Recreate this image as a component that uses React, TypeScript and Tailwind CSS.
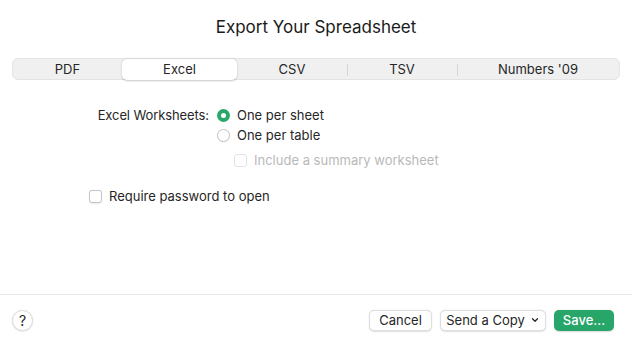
import { ChevronDown } from "lucide-react";

const tabs = [
  { label: "PDF", w: "w-[109px]" },
  { label: "Excel", w: "w-[115px]", active: true },
  { label: "CSV", w: "w-[110px]" },
  { label: "TSV", w: "w-[110px]" },
  { label: "Numbers '09", w: "flex-1" },
];

function Radio({ checked }: { checked?: boolean }) {
  return checked ? (
    <span className="flex h-[13px] w-[13px] items-center justify-center rounded-full bg-[#2aa76a]">
      <span className="h-[5px] w-[5px] rounded-full bg-white" />
    </span>
  ) : (
    <span className="h-[13px] w-[13px] rounded-full border border-[#c4c4c4] bg-white shadow-[0_0.5px_1px_rgba(0,0,0,0.08)]" />
  );
}

function Checkbox({ disabled }: { disabled?: boolean }) {
  return (
    <span
      className={
        disabled
          ? "h-[13px] w-[13px] rounded-[3px] border border-[#e3e3e3] bg-white"
          : "h-[13px] w-[13px] rounded-[3px] border border-[#c4c4c4] bg-white shadow-[0_0.5px_1px_rgba(0,0,0,0.08)]"
      }
    />
  );
}

export default function App() {
  return (
    <div
      className="flex h-[341px] w-[632px] flex-col bg-white text-[13px] leading-[19px] text-[#262626]"
      style={{ fontFamily: "Inter, 'Liberation Sans', sans-serif" }}
    >
      <h1 className="pt-[16px] text-center text-[17px] leading-[22px] text-[#1a1a1a]">
        Export Your Spreadsheet
      </h1>

      {/* Segmented control */}
      <div className="mx-[12px] mt-[20px] flex h-[22px] items-center rounded-[6px] border border-[#e4e4e4] bg-[#f0f0f0]">
        {tabs.map((t, i) => {
          const showSep = i > 0 && !t.active && !tabs[i - 1].active;
          return (
            <div key={t.label} className={`relative flex h-full items-center justify-center ${t.w}`}>
              {showSep && <span className="absolute left-0 top-[5px] h-[12px] w-px bg-[#d6d6d6]" />}
              {t.active ? (
                <div className="flex h-[21px] w-full items-center justify-center rounded-[5px] bg-white shadow-[0_0.5px_2px_rgba(0,0,0,0.22)]">
                  {t.label}
                </div>
              ) : (
                <span>{t.label}</span>
              )}
            </div>
          );
        })}
      </div>

      {/* Options */}
      <div className="mt-[26px] flex flex-col">
        <div className="flex items-center">
          <span className="w-[209px] text-right tracking-[-0.1px]">Excel Worksheets:</span>
          <div className="ml-[8px] flex items-center gap-[7px]">
            <Radio checked />
            <span>One per sheet</span>
          </div>
        </div>
        <div className="mt-[1px] flex items-center pl-[217px]">
          <div className="flex items-center gap-[7px]">
            <Radio />
            <span>One per table</span>
          </div>
        </div>
        <div className="mt-[6px] flex items-center pl-[234px]">
          <div className="flex items-center gap-[7px] text-[#b9b9b9]">
            <Checkbox disabled />
            <span>Include a summary worksheet</span>
          </div>
        </div>
        <div className="mt-[17px] flex items-center pl-[89px]">
          <div className="flex items-center gap-[7px]">
            <Checkbox />
            <span>Require password to open</span>
          </div>
        </div>
      </div>

      <div className="flex-1" />

      {/* Footer */}
      <div className="flex h-[47px] items-center border-t border-[#e6e6e6] pl-[12px] pr-[18px] pt-[4px]">
        <button className="flex h-[21px] w-[21px] items-center justify-center rounded-full border border-[#dcdcdc] bg-white text-[14px] shadow-[0_0.5px_1.5px_rgba(0,0,0,0.15)]">
          ?
        </button>
        <div className="ml-auto flex items-center gap-[8px]">
          <button className="flex h-[21px] w-[63px] items-center justify-center rounded-[5px] border border-[#dedede] bg-white shadow-[0_0.5px_1.5px_rgba(0,0,0,0.12)]">
            Cancel
          </button>
          <button className="flex h-[21px] w-[106px] items-center justify-center gap-[5px] rounded-[5px] border border-[#dedede] bg-white shadow-[0_0.5px_1.5px_rgba(0,0,0,0.12)]">
            Send a Copy
            <ChevronDown size={10} strokeWidth={3} />
          </button>
          <button className="flex h-[21px] w-[60px] items-center justify-center rounded-[5px] bg-[#28a66a] font-medium text-white shadow-[0_0.5px_1.5px_rgba(0,0,0,0.15)]">
            Save...
          </button>
        </div>
      </div>
    </div>
  );
}
